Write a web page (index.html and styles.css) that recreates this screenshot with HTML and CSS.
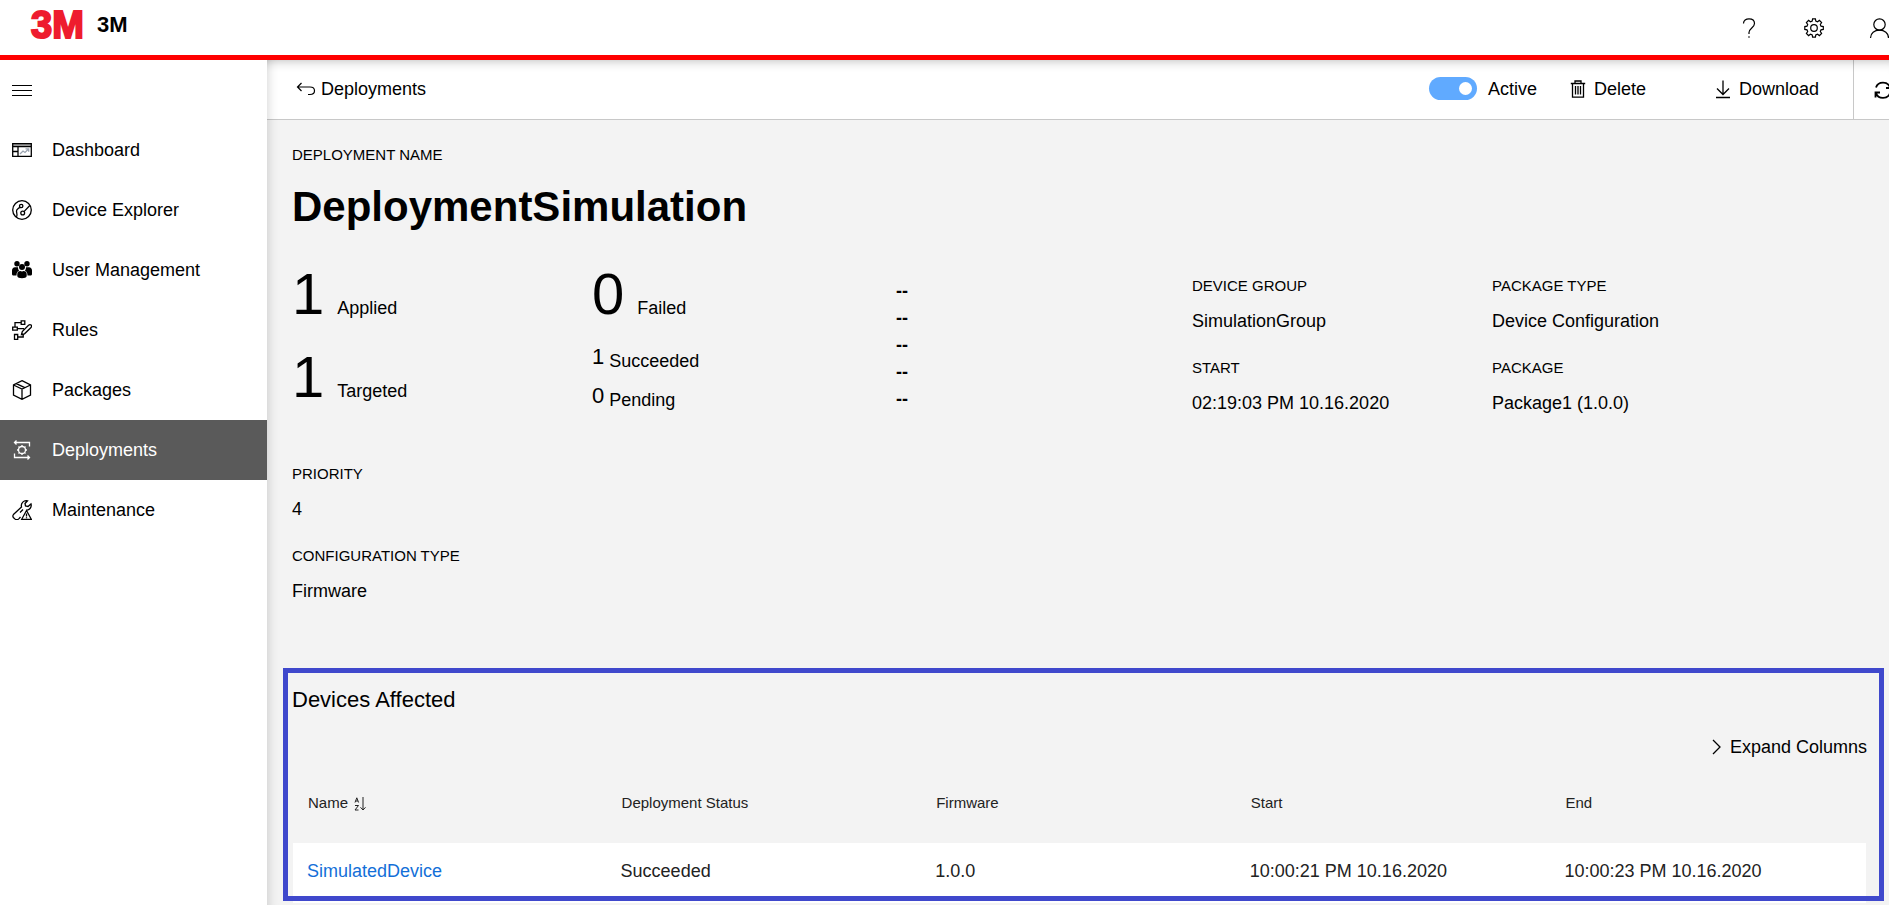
FILE: index.html
```html
<!DOCTYPE html>
<html lang="en">
<head>
<meta charset="utf-8">
<title>3M - Deployments</title>
<link rel="stylesheet" href="styles.css">
</head>
<body>
<header class="header">
  <svg class="logo" viewBox="0 0 64 48" role="img" aria-label="3M logo"><text class="logo-text" x="2" y="36">3M</text></svg>
  <span class="brand">3M</span>
  <div class="header-actions">
    <button class="icon-button" aria-label="Help"><svg class="icon thin" viewBox="0 0 20 20"><path d="M4.500 5.500C4.500 2.500 7 .8 10 .8s5.500 1.700 5.500 4.700c0 4-5.500 5-5.500 9V16M10 18.200v1.600"/></svg></button>
    <button class="icon-button" aria-label="Settings"><svg class="icon thin" viewBox="0 0 20 20"><circle cx="10" cy="10" r="3.300"/><path d="M8.200 3 8.600.8h2.800l.4 2.200 1.700.7L15.400 2.400l2.200 2.200-1.300 1.900.7 1.700 2.300.4v2.800l-2.300.4-.7 1.700 1.300 1.900-2.200 2.200-1.900-1.300-1.700.7-.4 2.200H8.600L8.200 17l-1.700-.7-1.900 1.300-2.200-2.200 1.300-1.900L3 11.800.8 11.400V8.600L3 8.200l.7-1.700-1.300-1.900 2.200-2.200 1.900 1.300z"/></svg></button>
    <button class="icon-button" aria-label="Profile"><svg class="icon thin" viewBox="0 0 20 20"><circle cx="10.500" cy="6.500" r="5.700"/><path d="M1.500 20c0-5 4-7.800 9-7.800s9 2.800 9 7.800"/></svg></button>
  </div>
</header>
<div class="layout">
  <nav class="sidebar">
    <button class="menu-button" aria-label="Menu"><svg class="icon" viewBox="0 0 20 20"><path class="line" d="M0 5.500h20M0 10.500h20M0 15.500h20"/></svg></button>
    <a class="nav-item" href="#"><svg class="icon" viewBox="0 0 20 20"><path fill="#999" stroke="none" d="M1 4h18v2.500H1z"/><path d="M.7 3.700h18.600v12.600H.7zM.7 6.700h18.600M6 6.700v9.600M.7 11.500H6"/><path stroke="#9aa3b0" d="M8 14l3-3 2 1.500 3.500-3.500M13.500 8.800h3.200v3"/></svg>Dashboard</a>
    <a class="nav-item" href="#"><svg class="icon" viewBox="0 0 20 20"><circle cx="10" cy="10" r="9.300"/><circle cx="9.200" cy="6" r="1.700"/><circle cx="10.700" cy="13" r="1.900"/><path d="M7.800 7.200C6 9 4 9.500 4.500 11.500S5.500 15 4.500 17M12 11.600 17.800 5.500"/></svg>Device Explorer</a>
    <a class="nav-item" href="#"><svg class="icon solid" viewBox="0 0 20 20"><circle cx="5" cy="3.800" r="2.700"/><circle cx="15" cy="3.800" r="2.700"/><circle cx="10" cy="7" r="3"/><path d="M0 14v-3.500c0-2 1.200-3.300 3-3.300h3C6 9 6.600 10 7.200 10.700 5.400 11.300 4.600 12.500 4.500 15.500H2C.7 15.500 0 15 0 14zM20 14v-3.500c0-2-1.200-3.300-3-3.300h-3C14 9 13.400 10 12.800 10.700c1.800.6 2.600 1.800 2.700 4.800H18c1.300 0 2-.5 2-1.500zM5.300 16v-2c0-1.800 1.300-3 3-3 1 .6 2.400.6 3.400 0 1.700 0 3 1.200 3 3v2c0 3-9.400 3-9.400 0z"/></svg>User Management</a>
    <a class="nav-item" href="#"><svg class="icon" viewBox="0 0 20 20"><path d="M9.200.8h3.600v3.500H9.200zM.7 7.200h4.600v3H.7zM2.500 14.500h3.200V19.300H2.500zM3 7V2.700h6M5.300 8.700H12M5.700 17h5.500v-3M9.500 14.500 10.300 11.500 16.500 5.300c2-1.700 4 .4 2.500 2.200L12.500 13.800z"/></svg>Rules</a>
    <a class="nav-item" href="#"><svg class="icon" viewBox="0 0 20 20"><path d="M10 .7 18.500 5v10L10 19.300 1.500 15V5zM1.500 5 10 9l8.500-4M10 9v10.300M4.300 3.600l8.500 4.100"/></svg>Packages</a>
    <a class="nav-item active" href="#"><svg class="icon" viewBox="0 0 20 20"><path d="M4.500.5 2.500 2.500l2 2M2.500 2.500h15V6.500M15.500 15.500l2 2-2 2M17.500 17.500H2.500V13.500"/><circle cx="10" cy="10" r="3.500"/><path d="M10 5v1.500M10 13.500V15M5 10h1.500M13.500 10H15M6.500 6.500l1 1M12.500 12.500l1 1M6.500 13.500l1-1M12.500 7.500l1-1"/></svg>Deployments</a>
    <a class="nav-item" href="#"><svg class="icon" viewBox="0 0 20 20"><path d="M8.500 17 7 18.600c-1.500 1.500-3.500 1-4.500 0-2-1.500-2-3-.8-4.400L9.500 7C8.500 3 12 0 15.500.8L13 3.500l.5 2.500 2.500.5L19 4c1 3.500-2 6.500-4.500 6M8 12.500l3-3"/><path d="M14.500 10.500 19.300 19.300H9.700zM14.500 13.500v3M14.500 17.300v1"/></svg>Maintenance</a>
  </nav>
  <main class="main">
    <div class="toolbar">
      <a class="tool back" href="#"><svg class="icon thin" viewBox="0 0 20 20"><path d="M5.500 4 1.500 8l4 4M1.500 8H14c6 0 6 7.500 0 7.500h-2"/></svg>Deployments</a>
      <div class="tools">
        <label class="tool toggle"><input class="switch" type="checkbox" checked>Active</label>
        <button class="tool delete"><svg class="tool-icon" viewBox="0 0 16 20"><path d="M.8 4.500h14.400M5 4.300V2h6v2.300M2.500 4.500v13.700h11V4.500M5.500 7v8.500M8 7v8.500M10.500 7v8.500"/></svg>Delete</button>
        <button class="tool download"><svg class="tool-icon" viewBox="0 0 16 20"><path d="M8 1.500v14M2 9.500l6 6 6-6M1 18.500h14"/></svg>Download</button>
        <button class="refresh" aria-label="Refresh"><svg class="icon" viewBox="0 0 20 20"><path stroke-width="1.800" d="M3 7.500C5 1 15 1 17 7.500M17.500 3v5h-4.500M17 13c-2 6.500-12 6.500-14 0M2.500 17.500V12.500H7"/></svg></button>
      </div>
    </div>
    <div class="content">
      <div class="label">DEPLOYMENT NAME</div>
      <h1 class="title">DeploymentSimulation</h1>
      <div class="grid">
        <div class="stats">
          <div class="stat"><span class="big">1</span>Applied</div>
          <div class="stat"><span class="big">1</span>Targeted</div>
        </div>
        <div>
          <div class="stat"><span class="big">0</span>Failed</div>
          <div class="small-stats">
            <div class="small-stat"><span class="num">1</span>Succeeded</div>
            <div class="small-stat"><span class="num">0</span>Pending</div>
          </div>
        </div>
        <div class="dashes"><div>--</div><div>--</div><div>--</div><div>--</div><div>--</div></div>
        <dl class="info offset">
          <div><dt class="label">DEVICE GROUP</dt><dd class="value">SimulationGroup</dd></div>
          <div><dt class="label">START</dt><dd class="value">02:19:03 PM 10.16.2020</dd></div>
        </dl>
        <dl class="info offset">
          <div><dt class="label">PACKAGE TYPE</dt><dd class="value">Device Configuration</dd></div>
          <div><dt class="label">PACKAGE</dt><dd class="value">Package1 (1.0.0)</dd></div>
        </dl>
        <dl class="info">
          <div><dt class="label">PRIORITY</dt><dd class="value">4</dd></div>
          <div><dt class="label">CONFIGURATION TYPE</dt><dd class="value">Firmware</dd></div>
        </dl>
      </div>
    </div>
    <section class="devices">
      <h2 class="subtitle">Devices Affected</h2>
      <button class="expand"><svg class="chevron" viewBox="0 0 10 16"><path d="M1 1l7 7-7 7"/></svg>Expand Columns</button>
      <table class="table">
        <thead><tr><th>Name <svg class="sort" viewBox="0 0 12 14"><path d="M1 5.500 2.800.8l1.800 4.700M1.700 4h2.200M1 8.500h3.500L1 13h3.500M9 0v12.500M6.500 10.300 9 13l2.500-2.700"/></svg></th><th>Deployment Status</th><th>Firmware</th><th>Start</th><th>End</th></tr></thead>
        <tbody><tr><td><a class="link" href="#">SimulatedDevice</a></td><td>Succeeded</td><td>1.0.0</td><td>10:00:21 PM 10.16.2020</td><td>10:00:23 PM 10.16.2020</td></tr></tbody>
      </table>
    </section>
  </main>
</div>
</body>
</html>
```
FILE: styles.css
```css
* { box-sizing: border-box; }
body {
  margin: 0;
  height: 100vh;
  display: flex;
  flex-direction: column;
  overflow: hidden;
  font: 18px/24px "Liberation Sans", Arial, sans-serif;
  color: #000;
  background: #fff;
}
button { font: inherit; color: inherit; background: none; border: 0; padding: 0; cursor: pointer; }
a { color: inherit; text-decoration: none; }
h1, h2, dl, dd { margin: 0; }
svg { flex: none; fill: none; stroke: currentColor; stroke-width: 1.3; }

.header {
  display: flex;
  align-items: center;
  height: 60px;
  padding-left: 29px;
  border-bottom: 5px solid #f00;
}
.logo { width: 64px; height: 48px; margin-top: -3px; }
.logo-text { font: bold 38px "Liberation Sans", Arial, sans-serif; fill: #ee1c2e; stroke: #ee1c2e; stroke-width: 2; }
.brand { margin: -6px 0 0 4px; font-size: 22px; font-weight: bold; }
.header-actions { display: flex; gap: 45px; margin-left: auto; }
.icon-button { display: flex; }
.icon { width: 20px; height: 20px; }
.thin { stroke-width: 1.2; }
.solid { fill: currentColor; stroke: none; }
.line { stroke-width: 1; }

.layout { flex: 1; display: flex; min-height: 0; }
.sidebar { flex: none; width: 267px; background: #fff; }
.menu-button { display: flex; align-items: center; height: 60px; padding-left: 12px; }
.nav-item { display: flex; align-items: center; gap: 20px; height: 60px; padding-left: 12px; }
.nav-item.active { background: #5a5a5a; color: #fff; }

.main { position: relative; flex: 1; min-width: 0; background: #f3f3f3; overflow: hidden; }
.main::after {
  content: "";
  position: absolute;
  inset: 0;
  pointer-events: none;
  box-shadow: inset 12px 0 12px -12px rgba(0, 0, 0, .2), inset 0 12px 12px -12px rgba(0, 0, 0, .3);
}
.toolbar {
  display: flex;
  justify-content: space-between;
  height: 60px;
  padding-left: 29px;
  background: #fff;
  border-bottom: 1px solid #c8c8c8;
}
.tool { display: flex; align-items: center; gap: 8px; padding-bottom: 2px; }
.back { gap: 5px; }
.tools { display: flex; }
.toggle { gap: 11px; margin-right: 33px; }
.switch {
  appearance: none;
  width: 48px;
  height: 23px;
  margin: 0;
  padding: 5px;
  border-radius: 12px;
  background: #60aaff;
}
.switch::before { content: ""; display: block; width: 13px; height: 13px; border-radius: 50%; background: #fff; }
.switch:checked::before { margin-left: auto; }
.delete { margin-right: 69px; }
.download { margin-right: 34px; }
.tool-icon { width: 16px; height: 20px; }
.refresh { display: flex; align-items: center; width: 36px; padding-left: 19px; border-left: 1px solid #c8c8c8; overflow: hidden; }

.content { padding: 25px 25px 0; }
.label { font-size: 15px; line-height: 20px; }
.value { margin-top: 13px; }
.title { margin: 17px 0 32px; font-size: 42px; line-height: 50px; }
.grid { display: grid; grid-template-columns: repeat(5, minmax(0, 300px)); row-gap: 49px; }
.stats { display: grid; gap: 23px; align-content: start; }
.stat { display: flex; align-items: baseline; gap: 13px; }
.big { font-size: 58px; line-height: 60px; }
.small-stats { display: grid; gap: 15px; margin-top: 25px; }
.small-stat { display: flex; gap: 5px; }
.num { font-size: 22px; line-height: 16px; }
.dashes { padding: 14px 0 0 4px; font-weight: bold; line-height: 27px; }
.info { display: grid; gap: 25px; align-content: start; }
.offset { padding-top: 12px; }

.devices { position: relative; margin: 65px 5px 0 16px; padding: 17px 17px 0 9px; }
.devices::after { content: ""; position: absolute; inset: 0 0 2px; border: 5px solid #3f48cc; pointer-events: none; }
.subtitle { font-size: 22px; font-weight: normal; line-height: 30px; }
.expand { display: flex; align-items: center; gap: 8px; margin: 20px 0 3px auto; }
.chevron { width: 10px; height: 16px; }
.table { width: 100%; padding: 0 1px; table-layout: fixed; border-spacing: 0; }
.table th { height: 81px; padding: 0 14px; text-align: left; font-size: 15px; font-weight: normal; color: #222; }
.table td { height: 60px; padding: 0 13px 4px; background: #fff; color: #222; }
.table th:first-child { padding-left: 15px; }
.table td:first-child { padding-left: 14px; }
.sort { width: 12px; height: 14px; margin-left: 2px; vertical-align: middle; stroke-width: 1; }
.table .link { color: #136fd8; }
```
